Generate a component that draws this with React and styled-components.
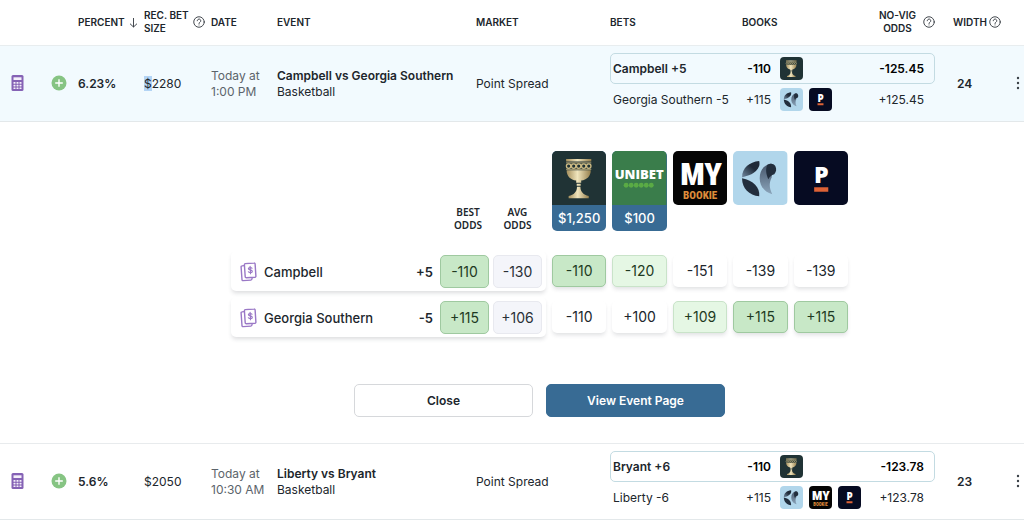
import React, { Fragment } from 'react'
import styled, { createGlobalStyle } from 'styled-components'

const GlobalStyle = createGlobalStyle`
  * { box-sizing: border-box; }
  body {
    margin: 0;
    background: #fff;
    color: #20262c;
    font-family: Inter, "Liberation Sans", sans-serif;
    font-size: 12px;
    line-height: 16px;
  }
  button { font-family: inherit; }
`

const BetTable = styled.table`
  width: 100%;
  table-layout: fixed;
  border-collapse: separate;
  border-spacing: 0;
`

const Col = styled.col`
  width: ${props => props.$w ? `${props.$w}px` : 'auto'};
`

const HeadCell = styled.th`
  height: 46px;
  padding: 0 0 1px;
  border-bottom: 1px solid #e8edef;
  font-size: 10px;
  line-height: 13px;
  font-weight: 600;
  text-align: left;
  white-space: nowrap;
`

const HeadLabel = styled.span`
  display: flex;
  align-items: center;
  justify-content: ${props => props.$end ? 'flex-end' : 'flex-start'};
  gap: ${props => props.$gap || 4}px;
  padding-left: ${props => props.$indent || 0}px;
  text-align: ${props => props.$end ? 'center' : 'left'};
`

const BodyRow = styled.tr`
  background: ${props => props.$active ? '#f2fafe' : '#fff'};
`

const Cell = styled.td`
  padding: 7px 0 6px ${props => props.$indent || 0}px;
  border-bottom: 1px solid #e3e8ea;
  vertical-align: middle;
  color: ${props => props.$muted ? '#5c646b' : 'inherit'};
  font-weight: ${props => props.$bold ? 600 : 400};
`

const IconButton = styled.button`
  display: block;
  padding: 0;
  border: 0;
  background: none;
  cursor: pointer;
`

const Currency = styled.span`
  background: ${props => props.$selected ? '#b3d4f5' : 'transparent'};
`

const EventName = styled.div`
  font-weight: 600;
`

const BetLine = styled.div`
  display: grid;
  grid-template-columns: 108px 50px 1fr auto;
  align-items: center;
  height: 31px;
  padding: 0 10px 0 2px;
  border: 1px solid ${props => props.$best ? '#c3dbe2' : 'transparent'};
  border-radius: 5px;
  font-weight: ${props => props.$best ? 600 : 400};
`

const BetName = styled.span`
  white-space: nowrap;
`

const Price = styled.span`
  color: ${props => props.$best ? '#000' : 'inherit'};
  text-align: right;
`

const BookList = styled.span`
  display: flex;
  gap: 6px;
  padding-left: 9px;
`

const DetailCell = styled.td`
  padding: 29px 0 26px 55px;
  border-bottom: 1px solid #e8ebed;
`

const OddsTable = styled.table`
  width: 617px;
  max-width: 100%;
  margin: 0 auto;
  table-layout: fixed;
  border-collapse: separate;
  border-spacing: 0;
`

const OddsHead = styled.th`
  padding: 0 ${props => props.$padRight || 0}px 19px 0;
  vertical-align: bottom;
  font-family: "Noto Sans", "Open Sans", sans-serif;
  font-size: 10px;
  line-height: 13px;
  font-weight: 600;
`

const BookHead = styled.th`
  padding: 0 0 20px 6px;
  vertical-align: top;
`

const BookCard = styled.div`
  overflow: hidden;
  border-radius: 5px;
  background: ${props => props.$limited ? '#386b94' : 'transparent'};
`

const Limit = styled.div`
  height: 26px;
  color: #fff;
  font-size: 13px;
  line-height: 26px;
  font-weight: 500;
  text-align: center;
`

const TeamCell = styled.td`
  padding: 0 0 6px;
`

const TeamCard = styled.div`
  display: flex;
  align-items: center;
  gap: 4px;
  height: 40px;
  padding: 4px 4px 3px 9px;
  border-radius: 5px;
  box-shadow: 0 3px 4px -1px rgba(40, 50, 60, 0.17);
`

const TeamName = styled.span`
  flex: 1;
  padding-left: 3px;
  font-size: 13px;
  font-weight: 500;
`

const Spread = styled.span`
  padding-right: 3px;
  font-size: 13px;
  font-weight: 600;
`

const tones = {
  best: { bg: '#c8e8c7', line: '#9fc9a0', text: '#1f3a22' },
  good: { bg: '#e5f7e4', line: '#c9e3c9', text: '#1f3a22' },
  avg: { bg: '#f4f5fa', line: '#e8e9ef', text: '#2a3036' },
  none: { bg: '#fff', line: 'transparent', text: '#20262c' },
}

const Odds = styled.div`
  display: flex;
  flex-shrink: 0;
  align-items: center;
  justify-content: center;
  width: ${props => props.$summary ? '49px' : '100%'};
  height: ${props => props.$summary ? 33 : 32}px;
  border: 1px solid ${props => tones[props.$tone].line};
  border-radius: 5px;
  background: ${props => tones[props.$tone].bg};
  color: ${props => tones[props.$tone].text};
  font-size: 14px;
  box-shadow: ${props => props.$summary ? 'none' : '0 3px 4px -1px rgba(40, 50, 60, 0.15)'};
`

const OddsCell = styled.td`
  padding: 0 0 6px 6px;
`

const Actions = styled.div`
  display: flex;
  justify-content: center;
  gap: 13px;
  margin-top: 41px;
`

const ActionButton = styled.button`
  width: 179px;
  height: 33px;
  border: 1px solid ${props => props.$primary ? '#386b94' : '#d6d8db'};
  border-radius: 5px;
  background: ${props => props.$primary ? '#386b94' : '#fff'};
  color: ${props => props.$primary ? '#fff' : '#20262c'};
  font-size: 12px;
  font-weight: 600;
  cursor: pointer;
`

const LogoSvg = styled.svg`
  display: block;
  width: ${props => props.$small ? '23px' : '100%'};
  height: ${props => props.$small ? '23px' : 'auto'};
  border-radius: ${props => props.$small ? 4 : 0}px;
`

const Goblet = () => (
  <>
    <defs>
      <linearGradient id="gold" x1="0" x2="1">
        <stop offset="0" stopColor="#a58f5c" />
        <stop offset="0.45" stopColor="#f0e5bd" />
        <stop offset="1" stopColor="#96804e" />
      </linearGradient>
    </defs>
    <rect width="54" height="54" fill="#203335" />
    <path d="M14 8h25v2.500H14z" fill="url(#gold)" />
    <path d="M14.500 19h24c0 6-4 9.500-9.500 10.300v2.200h-5v-2.200C18.500 28.500 14.500 25 14.500 19z" fill="url(#gold)" />
    <g fill="none" stroke="#cdbb84" strokeWidth="1.300">
      {[16.5, 21.5, 26.5, 31.5, 36.5].map(x => <circle key={x} cx={x} cy="15" r="2.200" />)}
      <path d="M14 11.800h25M14 18.200h25" strokeWidth="0.800" />
    </g>
    <path d="M24.500 32.500h4v2h-4zM24.800 35.500h3.400c0 5 3 8 8.300 9.200v2.300h-20v-2.300c5.300-1.200 8.300-4.200 8.300-9.200z" fill="url(#gold)" />
  </>
)

const Unibet = () => (
  <>
    <rect width="54" height="54" fill="#3a7d4b" />
    <text x="27" y="28" textAnchor="middle" fill="#fff" fontFamily="Open Sans" fontSize="13" fontWeight="800">UNIBET</text>
    {[14, 19, 24, 29, 34, 39].map(x => <circle key={x} cx={x} cy="34" r="2.400" fill="#5aab45" />)}
  </>
)

const condensed = 'Roboto Condensed, Open Sans Condensed, Noto Sans Condensed, Roboto'

const MyBookie = () => (
  <>
    <rect width="54" height="54" fill="#050505" />
    <text x="28" y="34" textAnchor="middle" fill="#fff" fontFamily={condensed} fontSize="32" fontWeight="900">MY</text>
    <text x="27" y="48" textAnchor="middle" fill="#dc8c3a" fontFamily={condensed} fontSize="11" fontWeight="800">BOOKIE</text>
  </>
)

const Crescent = () => (
  <>
    <defs>
      <linearGradient id="blade" x1="1" y1="0" x2="0" y2="1">
        <stop offset="0.4" stopColor="#1f2a38" />
        <stop offset="1" stopColor="#7088a0" />
      </linearGradient>
      <linearGradient id="fade" x1="0" y1="0" x2="0" y2="1">
        <stop offset="0" stopColor="#46556a" />
        <stop offset="1" stopColor="#8ba5bb" />
      </linearGradient>
    </defs>
    <rect width="54" height="54" fill="#b1d6eb" />
    <path d="M26 10C16 11 9 17 9 26c5-1 14-3 17-11 .4-2 .4-3 0-5z" fill="url(#blade)" />
    <path d="M9 27c0 10 7 17 17 18 1-9-6-16-17-18z" fill="#222e3d" />
    <path d="M38 12.500C30 14 26.500 20 26.500 27c0 8 5 14 12.500 16-3-6-3.500-11-.500-17z" fill="url(#fade)" />
    <path d="M34 14c3-2 6-2 8 1 1.500 3 1 6-1 8-3 1-4.500 2.500-6 5-2-5-3-9-1-14z" fill="#222e3d" />
  </>
)

const Pinnacle = () => (
  <>
    <rect width="54" height="54" fill="#060b22" />
    <text x="27" y="32" textAnchor="middle" fill="#fff" fontFamily="Open Sans" fontSize="23" fontWeight="800">P</text>
    <path d="M20 36h14v4.500H20z" fill="#dd6236" />
  </>
)

const logos = {
  goblet: { art: Goblet, label: 'Goblet' },
  unibet: { art: Unibet, label: 'Unibet' },
  mybookie: { art: MyBookie, label: 'MyBookie' },
  crescent: { art: Crescent, label: 'Crescent' },
  pinnacle: { art: Pinnacle, label: 'Pinnacle' },
}

const BookLogo = ({ book, small }) => {
  const { art: Art, label } = logos[book]
  return (
    <LogoSvg $small={small} viewBox="0 0 54 54" role="img" aria-label={label}>
      <Art />
    </LogoSvg>
  )
}

const HelpIcon = () => (
  <svg width="12" height="12" viewBox="0 0 24 24" fill="none" stroke="#30363c" strokeWidth="1.800" strokeLinecap="round">
    <circle cx="12" cy="12" r="10.500" />
    <path d="M8.500 9.500a3.500 3.500 0 1 1 5.300 3c-1.200.8-1.800 1.200-1.800 2.500M12 17.800v.2" />
  </svg>
)

const SortArrow = () => (
  <svg width="9" height="11" viewBox="0 0 9 11" fill="none" stroke="#30363c" strokeWidth="0.900">
    <path d="M4.500 1v9M1 6.700 4.500 10 8 6.700" />
  </svg>
)

const CalculatorIcon = () => (
  <svg width="13" height="16" viewBox="0 0 13 16">
    <rect x="0.500" width="12" height="16" rx="1.500" fill="#8562b5" />
    <path d="M2.500 2.300h8v2.700h-8z" fill="#f4effa" />
    {[7, 9.7, 12.4].map(y => [2.5, 5.5, 8.5].map(x => (
      <rect key={`${x}-${y}`} x={x} y={y} width="2" height="1.700" rx="0.300" fill="#f4effa" />
    )))}
  </svg>
)

const PlusIcon = () => (
  <svg width="16" height="16" viewBox="0 0 16 16">
    <circle cx="8" cy="8" r="7.500" fill="#86c483" />
    <path d="M8 4.200v7.600M4.200 8h7.600" stroke="#fff" strokeWidth="1.400" />
  </svg>
)

const DotsIcon = () => (
  <svg width="4" height="14" viewBox="0 0 4 14" fill="#3b4147">
    <circle cx="2" cy="2" r="1.200" />
    <circle cx="2" cy="7" r="1.200" />
    <circle cx="2" cy="12" r="1.200" />
  </svg>
)

const BetSlipIcon = () => (
  <svg width="17" height="20" viewBox="0 0 17 20" fill="none" stroke="#9a78c6" strokeWidth="1.400" strokeLinejoin="round" strokeLinecap="round">
    <path d="M5.300 1.600 14 1a1 1 0 0 1 1.100.9l.8 12.200a1 1 0 0 1-.9 1.100l-8.700.5a1 1 0 0 1-1.100-.9L4.400 2.600a1 1 0 0 1 .9-1z" />
    <path d="M4.200 3.600 2 3.900a1 1 0 0 0-.9 1.100L2 17.700a1 1 0 0 0 1.100.9l7.800-.5c.8 0 1.100-.5 1.200-1.800" />
    <path d="M12 6.200c-.5-.9-3.600-1-3.600.5 0 1.700 3.900.8 3.900 2.700 0 1.600-3.300 1.500-3.900.4M10.100 4.300l.4 7.400" strokeWidth="1.200" />
  </svg>
)

const rows = [
  {
    id: 1, active: true, percent: '6.23%', size: '2280', day: 'Today at', time: '1:00 PM',
    event: 'Campbell vs Georgia Southern', sport: 'Basketball', market: 'Point Spread', width: '24',
    bets: [
      { name: 'Campbell +5', price: '-110', books: ['goblet'], noVig: '-125.45' },
      { name: 'Georgia Southern -5', price: '+115', books: ['crescent', 'pinnacle'], noVig: '+125.45' },
    ],
  },
  {
    id: 2, active: false, percent: '5.6%', size: '2050', day: 'Today at', time: '10:30 AM',
    event: 'Liberty vs Bryant', sport: 'Basketball', market: 'Point Spread', width: '23',
    bets: [
      { name: 'Bryant +6', price: '-110', books: ['goblet'], noVig: '-123.78' },
      { name: 'Liberty -6', price: '+115', books: ['crescent', 'mybookie', 'pinnacle'], noVig: '+123.78' },
    ],
  },
]

const books = [
  { id: 'goblet', limit: '$1,250' },
  { id: 'unibet', limit: '$100' },
  { id: 'mybookie' },
  { id: 'crescent' },
  { id: 'pinnacle' },
]

const teams = [
  {
    name: 'Campbell', spread: '+5', best: '-110', avg: '-130',
    odds: [['-110', 'best'], ['-120', 'good'], ['-151', 'none'], ['-139', 'none'], ['-139', 'none']],
  },
  {
    name: 'Georgia Southern', spread: '-5', best: '+115', avg: '+106',
    odds: [['-110', 'none'], ['+100', 'none'], ['+109', 'good'], ['+115', 'best'], ['+115', 'best']],
  },
]

const EventOdds = () => (
  <>
    <OddsTable>
      <colgroup>
        <Col $w={210} />
        <Col $w={54} />
        <Col $w={51} />
        {books.map(book => <Col key={book.id} />)}
      </colgroup>
      <thead>
        <tr>
          <OddsHead />
          <OddsHead>BEST<br />ODDS</OddsHead>
          <OddsHead $padRight={6}>AVG<br />ODDS</OddsHead>
          {books.map(book => (
            <BookHead key={book.id}>
              <BookCard $limited={Boolean(book.limit)}>
                <BookLogo book={book.id} />
                {book.limit && <Limit>{book.limit}</Limit>}
              </BookCard>
            </BookHead>
          ))}
        </tr>
      </thead>
      <tbody>
        {teams.map(team => (
          <tr key={team.name}>
            <TeamCell colSpan={3}>
              <TeamCard>
                <BetSlipIcon />
                <TeamName>{team.name}</TeamName>
                <Spread>{team.spread}</Spread>
                <Odds $summary $tone="best">{team.best}</Odds>
                <Odds $summary $tone="avg">{team.avg}</Odds>
              </TeamCard>
            </TeamCell>
            {team.odds.map(([value, tone], i) => (
              <OddsCell key={books[i].id}>
                <Odds $tone={tone}>{value}</Odds>
              </OddsCell>
            ))}
          </tr>
        ))}
      </tbody>
    </OddsTable>
    <Actions>
      <ActionButton type="button">Close</ActionButton>
      <ActionButton type="button" $primary>View Event Page</ActionButton>
    </Actions>
  </>
)

const BetRow = ({ row }) => (
  <BodyRow $active={row.active}>
    <Cell $indent={11}>
      <IconButton type="button" aria-label="Calculator"><CalculatorIcon /></IconButton>
    </Cell>
    <Cell $indent={9}>
      <IconButton type="button" aria-label="Add bet"><PlusIcon /></IconButton>
    </Cell>
    <Cell $bold>{row.percent}</Cell>
    <Cell><Currency $selected={row.active}>$</Currency>{row.size}</Cell>
    <Cell $muted>{row.day}<br />{row.time}</Cell>
    <Cell>
      <EventName>{row.event}</EventName>
      {row.sport}
    </Cell>
    <Cell>{row.market}</Cell>
    <Cell colSpan={3}>
      {row.bets.map((bet, i) => (
        <BetLine key={bet.name} $best={i === 0}>
          <BetName>{bet.name}</BetName>
          <Price $best={i === 0}>{bet.price}</Price>
          <BookList>
            {bet.books.map(book => <BookLogo key={book} book={book} small />)}
          </BookList>
          <Price $best={i === 0}>{bet.noVig}</Price>
        </BetLine>
      ))}
    </Cell>
    <Cell $bold $indent={22}>{row.width}</Cell>
    <Cell $indent={8}>
      <IconButton type="button" aria-label="More options"><DotsIcon /></IconButton>
    </Cell>
  </BodyRow>
)

const App = () => {
  return (
    <>
      <GlobalStyle />
      <BetTable>
        <colgroup>
          <Col $w={42} />
          <Col $w={36} />
          <Col $w={66} />
          <Col $w={67} />
          <Col $w={66} />
          <Col />
          <Col $w={134} />
          <Col $w={132} />
          <Col $w={128} />
          <Col $w={65} />
          <Col $w={73} />
          <Col $w={16} />
        </colgroup>
        <thead>
          <tr>
            <HeadCell />
            <HeadCell />
            <HeadCell><HeadLabel>PERCENT <SortArrow /></HeadLabel></HeadCell>
            <HeadCell><HeadLabel><span>REC. BET<br />SIZE</span><HelpIcon /></HeadLabel></HeadCell>
            <HeadCell>DATE</HeadCell>
            <HeadCell>EVENT</HeadCell>
            <HeadCell>MARKET</HeadCell>
            <HeadCell>BETS</HeadCell>
            <HeadCell>BOOKS</HeadCell>
            <HeadCell><HeadLabel $end $gap={7}><span>NO-VIG<br />ODDS</span><HelpIcon /></HeadLabel></HeadCell>
            <HeadCell><HeadLabel $indent={18} $gap={2}>WIDTH <HelpIcon /></HeadLabel></HeadCell>
            <HeadCell />
          </tr>
        </thead>
        <tbody>
          {rows.map(row => (
            <Fragment key={row.id}>
              <BetRow row={row} />
              {row.active && (
                <tr>
                  <DetailCell colSpan={12}><EventOdds /></DetailCell>
                </tr>
              )}
            </Fragment>
          ))}
        </tbody>
      </BetTable>
    </>
  )
}

export default App
